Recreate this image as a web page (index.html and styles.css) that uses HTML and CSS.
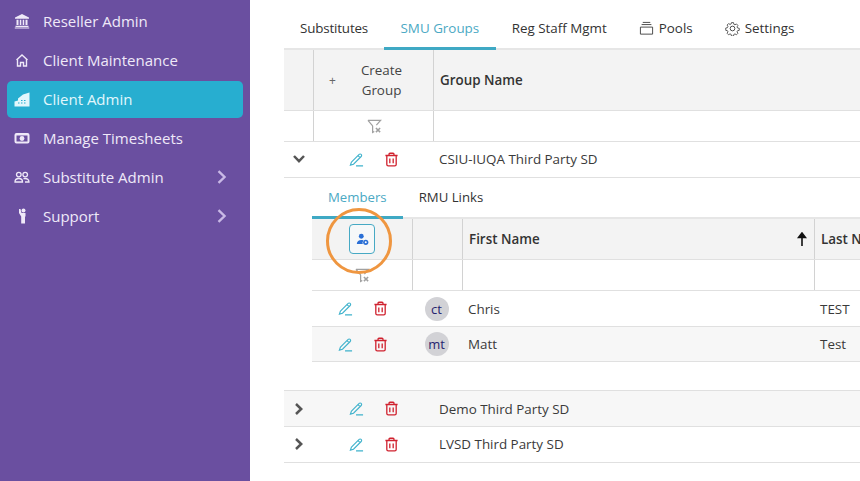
FILE: index.html
```html
<!DOCTYPE html>
<html lang="en">
<head>
<meta charset="utf-8">
<title>SMU Groups</title>
<link rel="stylesheet" href="styles.css">
</head>
<body>
<svg class="defs" width="0" height="0" aria-hidden="true">
  <symbol id="pencil" viewBox="0 0 16 16"><path d="M2.600 10.800 10.800 2.600a1.500 1.500 0 0 1 2.200 0 1.500 1.500 0 0 1 0 2.200L4.800 13 1.500 14zM9.600 3.900l2.200 2.200M7.500 14.800h7.500" fill="none" stroke="currentColor" stroke-width="1.200"/></symbol>
  <symbol id="trash" viewBox="0 0 16 16"><path d="M1.500 3.700h13M5.400 3.500V2.200q0-.9.9-.9h3.400q.9 0 .9.900v1.300M3 3.900v9.400q0 1.500 1.500 1.500h7q1.500 0 1.500-1.500V3.900M6.200 6.800v5.200M9.800 6.800v5.200" fill="none" stroke="currentColor" stroke-width="1.400"/></symbol>
  <symbol id="filter" viewBox="0 0 16 16"><path d="M1 1.500h13.500L10 6.500M6 7.300 1 1.500M6 7.300v7l1.800-1" fill="none" stroke="currentColor" stroke-width="1.300"/><path d="M9.500 9.500l4.500 4.500M14 9.500 9.500 14" fill="none" stroke="currentColor" stroke-width="1.600"/></symbol>
  <symbol id="chev-r" viewBox="0 0 12 12"><path d="M3 1 8.200 6 3 11" fill="none" stroke="currentColor" stroke-width="2"/></symbol>
  <symbol id="chev-b" viewBox="0 0 12 12"><path d="M3 1 8.200 6 3 11" fill="none" stroke="currentColor" stroke-width="2.500"/></symbol>
</svg>
<div class="app">
  <nav class="side">
    <a class="item">
      <svg class="ico" viewBox="0 0 16 16"><path d="M8 1 15 4.500V5.800H1V4.500zM2.500 6.700h2v5.400h-2zM5.800 6.700h1.500v5.400H5.800zM8.700 6.700h1.500v5.400H8.700zM11.500 6.700h2v5.400h-2zM1.500 12.800h13V14h-13zM.8 14.500h14.400V15.500H.8z" fill="currentColor"/></svg>
      <span class="lbl">Reseller Admin</span>
    </a>
    <a class="item">
      <svg class="ico" viewBox="0 0 16 16"><path d="M2.500 8 8 3l5.500 5M3.500 7.500V14h3V10.500h3V14h3V7.500" fill="none" stroke="currentColor" stroke-width="1.400"/></svg>
      <span class="lbl">Client Maintenance</span>
    </a>
    <a class="item active">
      <svg class="ico" viewBox="0 0 16 16"><path d="M.5 15.500V10.500L4 9.500V7.500L9 3.500 15.500 1.500V15.500zM7 9h1.500v1H7zM10 9h1.500v1H10zM7 11.500h1.500v1H7zM10 11.500h1.500v1H10zM4 11.500h1.500v1H4z" fill="currentColor" fill-rule="evenodd"/></svg>
      <span class="lbl">Client Admin</span>
    </a>
    <a class="item">
      <svg class="ico" viewBox="0 0 16 16"><path d="M2.500 3h11q2 0 2 2v6.500q0 2-2 2h-11q-2 0-2-2V5q0-2 2-2zM2.500 5.500v6h11v-6z" fill="currentColor" fill-rule="evenodd"/><circle cx="8" cy="8.500" r="2.400" fill="currentColor"/></svg>
      <span class="lbl">Manage Timesheets</span>
    </a>
    <a class="item">
      <svg class="ico" viewBox="0 0 16 16"><g fill="none" stroke="currentColor" stroke-width="1.300"><circle cx="4.800" cy="5.600" r="2.300"/><circle cx="11.200" cy="5.600" r="2.300"/><path d="M1 13c0-2.500 1.500-3.500 3.800-3.500S8.500 10.500 8.500 13zM9.500 9.700c3.500-.7 5.500.8 5.500 3.300h-4"/></g></svg>
      <span class="lbl">Substitute Admin</span>
      <svg class="chev"><use href="#chev-r"/></svg>
    </a>
    <a class="item">
      <svg class="ico" viewBox="0 0 16 16"><circle cx="9.500" cy="2.500" r="2" fill="currentColor"/><path d="M5 1h1.500L7.500 5H11.500V8.500H11V15.500H7.200V8.500L5 5z" fill="currentColor"/></svg>
      <span class="lbl">Support</span>
      <svg class="chev"><use href="#chev-r"/></svg>
    </a>
  </nav>
  <main class="main">
    <div class="tabs">
      <span class="tab first-tab">Substitutes</span>
      <span class="tab on">SMU Groups</span>
      <span class="tab">Reg Staff Mgmt</span>
      <span class="tab">
        <svg class="tabico" viewBox="0 0 16 16"><path d="M4 1.500h8M2.800 3.800h10.400M1.500 6.500h13v7.500h-13z" fill="none" stroke="#444" stroke-width="1"/></svg>Pools
      </span>
      <span class="tab">
        <svg class="tabico" viewBox="0 0 16 16"><g fill="none" stroke="#444" stroke-width="1"><circle cx="8" cy="8" r="2.500"/><path d="M6.800 1h2.400l.4 2 1.300.6 1.800-1 1.700 1.700-1 1.800.6 1.300 2 .4v2.400l-2 .4-.6 1.300 1 1.800-1.700 1.700-1.800-1-1.300.6-.4 2H6.800l-.4-2-1.300-.6-1.800 1-1.700-1.700 1-1.800-.6-1.300-2-.4V7.400l2-.4.600-1.300-1-1.800L3.300 2.200l1.800 1 1.300-.6z" transform="translate(.8 .8) scale(.9)"/></g></svg>Settings
      </span>
    </div>

    <div class="row outer head">
      <div class="c c-exp"></div>
      <div class="c c-act create"><span class="plus">+</span><span class="create-t">Create<br>Group</span></div>
      <div class="c c-name">Group Name</div>
    </div>
    <div class="row outer filt">
      <div class="c c-exp"></div>
      <div class="c c-act center"><svg class="fil"><use href="#filter"/></svg></div>
      <div class="c c-name"></div>
    </div>
    <div class="row outer data">
      <div class="c-exp exp"><svg class="caret" viewBox="0 0 12 12"><path d="M1 3 6 8.200 11 3" fill="none" stroke="currentColor" stroke-width="2.500"/></svg></div>
      <div class="c-act acts"><svg class="pen"><use href="#pencil"/></svg><svg class="del"><use href="#trash"/></svg></div>
      <div class="c-name txt">CSIU-IUQA Third Party SD</div>
    </div>

    <section class="detail">
      <div class="subtabs">
        <span class="subtab on">Members</span>
        <span class="subtab">RMU Links</span>
      </div>
      <div class="row inner ihead">
        <div class="c center"><span class="addbtn"><svg class="addico" viewBox="0 0 16 16"><circle cx="6.500" cy="4" r="3" fill="#2a6fd6"/><path d="M1 13.500c0-3.500 2.500-5 5.500-5 1 0 2 .2 2.800.6A4 4 0 0 0 8.300 13.500z" fill="#2a6fd6"/><circle cx="12" cy="11.500" r="3.200" fill="#2a6fd6"/><circle cx="12" cy="11.500" r="1.200" fill="#fff"/></svg></span></div>
        <div class="c"></div>
        <div class="c fname"><span>First Name</span><svg class="arrow" viewBox="0 0 10 14"><path d="M5 14V3M1.500 5.500 5 1l3.500 4.500z" fill="#111" stroke="#111" stroke-width="1.600"/></svg></div>
        <div class="c lname"><span>Last Name</span></div>
      </div>
      <div class="row inner ifilt">
        <div class="c center"><svg class="fil"><use href="#filter"/></svg></div>
        <div class="c"></div>
        <div class="c"></div>
        <div class="c"></div>
      </div>
      <div class="row inner idata">
        <div class="acts in"><svg class="pen"><use href="#pencil"/></svg><svg class="del"><use href="#trash"/></svg></div>
        <div class="av-c"><span class="av">ct</span></div>
        <div class="txt first">Chris</div>
        <div class="txt last">TEST</div>
      </div>
      <div class="row inner idata alt">
        <div class="acts in"><svg class="pen"><use href="#pencil"/></svg><svg class="del"><use href="#trash"/></svg></div>
        <div class="av-c"><span class="av">mt</span></div>
        <div class="txt first">Matt</div>
        <div class="txt last">Test</div>
      </div>
      <div class="ring"></div>
    </section>

    <div class="row outer data alt top">
      <div class="c-exp exp"><svg class="caret"><use href="#chev-b"/></svg></div>
      <div class="c-act acts"><svg class="pen"><use href="#pencil"/></svg><svg class="del"><use href="#trash"/></svg></div>
      <div class="c-name txt">Demo Third Party SD</div>
    </div>
    <div class="row outer data">
      <div class="c-exp exp"><svg class="caret"><use href="#chev-b"/></svg></div>
      <div class="c-act acts"><svg class="pen"><use href="#pencil"/></svg><svg class="del"><use href="#trash"/></svg></div>
      <div class="c-name txt">LVSD Third Party SD</div>
    </div>
  </main>
</div>
</body>
</html>
```

FILE: styles.css
```css
* { box-sizing: border-box; }
html, body { margin: 0; height: 100%; overflow: hidden; }
body { font-family: "Open Sans", "Noto Sans", sans-serif; font-size: 13.4px; color: #333; background: #fff; }
.defs { position: absolute; }
.app { display: flex; width: 860px; height: 481px; overflow: hidden; }

.side { width: 250px; flex: none; background: #6a4fa0; padding: 3px 7px 0; display: flex; flex-direction: column; gap: 2px; }
.item { height: 37px; border-radius: 5px; display: flex; align-items: center; padding: 0 0 1px 7px; color: #efe9f8; font-size: 15px; }
.item.active { background: #27aed0; color: #e2f7fc; }
.ico { width: 16px; height: 16px; flex: none; margin-right: 13px; }
.lbl { flex: 1; white-space: nowrap; padding-bottom: 1px; }
.chev { width: 14px; height: 16px; margin-right: 14px; color: #c9b9e6; }

.main { width: 610px; flex: none; padding-left: 34px; }
.tabs { height: 50px; display: flex; border-bottom: 2px solid #e6e6e6; }
.tab { height: 50px; padding: 6px 16px 0; display: flex; align-items: center; gap: 5px; color: #333; white-space: nowrap; }
.first-tab { width: 100px; letter-spacing: -.17px; }
.tab.on { color: #4ba9c4; border-bottom: 3px solid #3fa9c4; padding: 9px 16.500px 0; }
.tabico { width: 15px; height: 15px; }

.row { display: grid; }
.outer { grid-template-columns: 30px 120px 1fr; }
.c { border-right: 1px solid #d2d2d2; display: flex; align-items: center; }
.c-name.c { border-right: 0; }
.head { height: 61px; background: #f3f3f3; border-bottom: 1px solid #e0e0e0; }
.c-name { padding-left: 6px; font-weight: 600; }
.create { position: relative; justify-content: center; padding-left: 16px; }
.plus { position: absolute; left: 15px; color: #666; font-size: 12px; }
.create-t { text-align: center; line-height: 20px; color: #444; }
.filt { height: 31px; border-bottom: 1px solid #e0e0e0; }
.filt .c-name { font-weight: 400; }
.center { justify-content: center; }
.fil { width: 15px; height: 15px; color: #a0a0a0; }
.c-act .fil { margin-left: 2px; }
.data { height: 36px; border-bottom: 1px solid #e0e0e0; align-items: center; padding-bottom: 1px; }
.data.alt { background: #f7f7f7; }
.data.top { border-top: 1px solid #e0e0e0; height: 37px; padding-bottom: 0; }
.exp { padding-left: 9px; display: flex; align-items: center; color: #555; }
.caret { width: 12px; height: 12px; }
.acts { display: flex; align-items: center; justify-content: center; gap: 20px; }
.pen { width: 15px; height: 15px; color: #3fb2cc; }
.del { width: 15px; height: 15px; color: #d0222f; }
.txt { color: #3a3a3a; }
.c-name.txt { font-weight: 400; padding-left: 5px; }

.detail { position: relative; height: 212px; padding-left: 28px; }
.subtabs { height: 41px; display: flex; border-bottom: 2px solid #e6e6e6; }
.subtab { height: 41px; padding: 0 16px 1px; display: flex; align-items: center; color: #333; border-bottom: 3px solid transparent; font-size: 13.2px; }
.subtab.on { color: #4ba9c4; border-bottom-color: #3fa9c4; }
.inner { grid-template-columns: 101px 50px 352px 1fr; }
.ihead { height: 41px; background: #f3f3f3; border-bottom: 1px solid #e0e0e0; }
.fname { padding: 0 7px 0 6px; font-weight: 600; justify-content: space-between; }
.arrow { width: 10px; height: 14px; }
.lname { padding-left: 6px; font-weight: 600; border-right: 0; overflow: hidden; white-space: nowrap; width: 46px; }
.lname span { flex: none; }
.addbtn { width: 26px; height: 30px; border: 1px solid #46a9c4; border-radius: 4px; display: flex; align-items: center; justify-content: center; background: #f6f8f9; }
.addico { width: 13px; height: 13px; }
.ifilt { height: 31px; border-bottom: 1px solid #e0e0e0; }
.ifilt .c:last-child { border-right: 0; }
.idata { height: 36px; align-items: center; border-bottom: 1px solid #e0e0e0; }
.idata.alt { height: 35px; background: #f7f7f7; }
.av-c { display: flex; justify-content: center; padding-right: 3px; }
.av { width: 24px; height: 24px; border-radius: 50%; background: #d2d2d6; color: #26236f; display: flex; align-items: center; justify-content: center; font-size: 13px; }
.first { padding-left: 5px; }
.last { padding-left: 5px; }
.ring { position: absolute; left: 42px; top: 30px; width: 66px; height: 66px; border: 3px solid #ef9640; border-radius: 50%; }
```
